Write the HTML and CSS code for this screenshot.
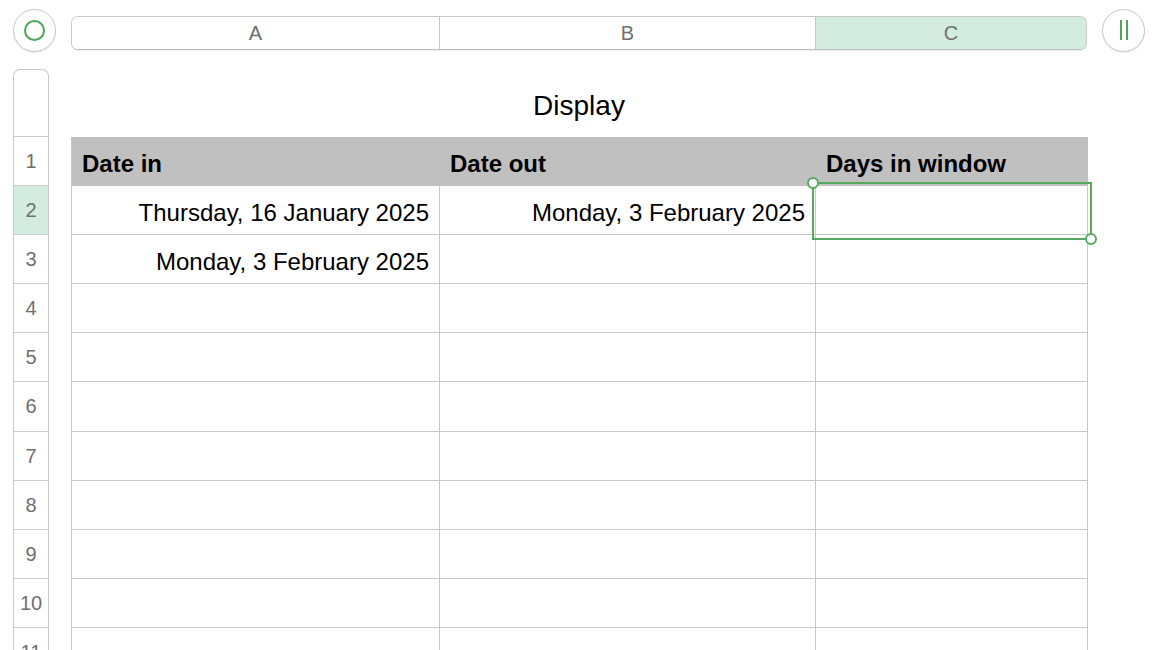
FILE: index.html
```html
<!DOCTYPE html>
<html>
<head>
<meta charset="utf-8">
<link rel="stylesheet" href="styles.css">
</head>
<body>
<div class="app">
  <div class="topbar">
    <div class="round-btn"><span class="ring"></span></div>
    <div class="colbar">
      <div class="colhead col-a">A</div>
      <div class="colhead col-b">B</div>
      <div class="colhead col-c selected">C</div>
    </div>
    <div class="round-btn"><span class="bars"><i></i><i></i></span></div>
  </div>
  <div class="sheet">
    <div class="rowheads">
      <div class="corner"></div>
      <div class="rowhead">1</div>
      <div class="rowhead selected">2</div>
      <div class="rowhead">3</div>
      <div class="rowhead">4</div>
      <div class="rowhead">5</div>
      <div class="rowhead tall">6</div>
      <div class="rowhead">7</div>
      <div class="rowhead">8</div>
      <div class="rowhead">9</div>
      <div class="rowhead">10</div>
      <div class="rowhead">11</div>
    </div>
    <div class="tablearea">
      <div class="title">Display</div>
      <div class="grid">
        <div class="cell head">Date in</div>
        <div class="cell head">Date out</div>
        <div class="cell head">Days in window</div>

        <div class="cell num">Thursday, 16 January 2025</div>
        <div class="cell num">Monday, 3 February 2025</div>
        <div class="cell"></div>

        <div class="cell num">Monday, 3 February 2025</div>
        <div class="cell"></div>
        <div class="cell"></div>

        <div class="cell"></div><div class="cell"></div><div class="cell"></div>
        <div class="cell"></div><div class="cell"></div><div class="cell"></div>
        <div class="cell tall"></div><div class="cell tall"></div><div class="cell tall"></div>
        <div class="cell"></div><div class="cell"></div><div class="cell"></div>
        <div class="cell"></div><div class="cell"></div><div class="cell"></div>
        <div class="cell"></div><div class="cell"></div><div class="cell"></div>
        <div class="cell"></div><div class="cell"></div><div class="cell"></div>
        <div class="cell"></div><div class="cell"></div><div class="cell"></div>

        <div class="selection">
          <span class="handle h-tl"></span>
          <span class="handle h-br"></span>
        </div>
      </div>
    </div>
  </div>
</div>
</body>
</html>
```

FILE: styles.css
```css
html, body {
  margin: 0;
  padding: 0;
  background: #ffffff;
  overflow: hidden;
  height: 650px;
}

.app {
  font-family: "Liberation Sans", Arial, Helvetica, sans-serif;
  color: #000;
}

.topbar {
  display: flex;
  align-items: flex-start;
  padding: 9px 0 0 13px;
}

.round-btn {
  box-sizing: border-box;
  width: 43px;
  height: 43px;
  border-radius: 50%;
  border: 1px solid #c6c6c6;
  box-shadow: 0 1px 1px rgba(0,0,0,0.08);
  background: #fff;
  display: flex;
  align-items: center;
  justify-content: center;
  flex: none;
}

.ring {
  box-sizing: border-box;
  width: 21px;
  height: 21px;
  border-radius: 50%;
  border: 2px solid #4ea55a;
}

.bars {
  display: flex;
  gap: 4px;
  height: 20px;
  margin-top: -1px;
}
.bars i {
  display: block;
  width: 2px;
  height: 20px;
  background: #4ea55a;
}

.colbar {
  box-sizing: border-box;
  margin: 7px 15px 0 15px;
  width: 1016px;
  height: 34px;
  display: grid;
  grid-template-columns: 368px 376px 1fr;
  border: 1px solid #c8c8c8;
  border-bottom-color: #bdbdbd;
  border-radius: 7px;
  overflow: hidden;
  box-shadow: 0 1px 0 rgba(0,0,0,0.05);
}

.colhead {
  display: flex;
  align-items: center;
  justify-content: center;
  font-size: 20px;
  color: #6f6f6f;
  background: #fff;
}
.col-a, .col-b {
  border-right: 1px solid #c8c8c8;
}
.colhead.selected {
  background: #d3ecdf;
}

.sheet {
  display: flex;
  align-items: flex-start;
  margin-top: 17px;
  padding-left: 13px;
}

.rowheads {
  box-sizing: border-box;
  width: 36px;
  border: 1px solid #c8c8c8;
  border-bottom: none;
  border-radius: 7px 7px 0 0;
  flex: none;
}
.corner {
  box-sizing: border-box;
  height: 67px;
  border-bottom: 1px solid #c8c8c8;
}
.rowhead {
  box-sizing: border-box;
  height: 49px;
  border-bottom: 1px solid #cfcfcf;
  display: flex;
  align-items: center;
  justify-content: center;
  font-size: 20px;
  color: #6f6f6f;
}
.rowhead.tall {
  height: 50px;
}
.rowhead.selected {
  background: #d3ecdf;
}

.tablearea {
  margin-left: 22px;
  width: 1016px;
}

.title {
  height: 68px;
  display: flex;
  align-items: center;
  justify-content: center;
  font-size: 28px;
  padding-top: 5px;
  box-sizing: border-box;
}

.grid {
  position: relative;
  display: grid;
  grid-template-columns: 368px 376px 272px;
  border-left: 1px solid #c8c8c8;
  box-sizing: border-box;
}

.cell {
  box-sizing: border-box;
  height: 49px;
  border-right: 1px solid #c8c8c8;
  border-bottom: 1px solid #c8c8c8;
  font-size: 24px;
  line-height: 49px;
  padding: 2px 10px 0 10px;
  white-space: nowrap;
}
.cell.tall {
  height: 50px;
}
.cell.head {
  background: #c0c0c0;
  font-weight: bold;
  border-right-color: #c0c0c0;
  border-bottom-color: #c0c0c0;
  padding-left: 10px;
}
.cell.num {
  text-align: right;
}

.selection {
  position: absolute;
  left: 740px;
  top: 45px;
  width: 280px;
  height: 58px;
  box-sizing: border-box;
  border: 2px solid #55a95e;
}
.handle {
  position: absolute;
  width: 12px;
  height: 12px;
  box-sizing: border-box;
  border-radius: 50%;
  border: 2px solid #55a95e;
  background: #fff;
}
.h-tl {
  left: -7px;
  top: -7px;
}
.h-br {
  right: -7px;
  bottom: -7px;
}
```
